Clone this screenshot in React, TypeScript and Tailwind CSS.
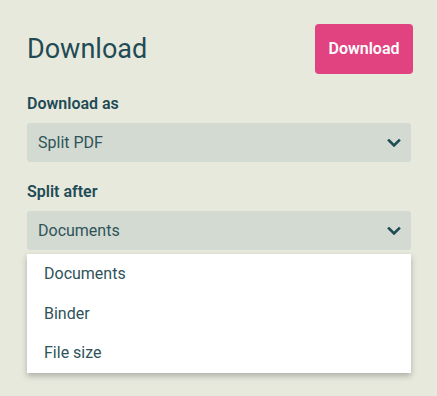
import React from 'react';

function Chevron() {
    return (
        <svg width="14" height="10" viewBox="0 0 14 10" className="text-[#1f4b55]">
            <path d="M2 2.5 L7 7.5 L12 2.5" fill="none" stroke="currentColor" strokeWidth="2.6" strokeLinecap="square" />
        </svg>
    );
}

function Select({ value }: { value: string }) {
    return (
        <div className="h-[39px] w-[384px] rounded-[3px] bg-[#d3dad2] flex items-center justify-between pl-[11px] pr-[10px]">
            <span className="text-base text-[#2e535a]">{value}</span>
            <Chevron />
        </div>
    );
}

export default function App() {
    const options = ['Documents', 'Binder', 'File size'];
    return (
        <div className="w-[437px] h-[396px] bg-[#e8e9dd] pl-[27px] pt-[24px] font-['Roboto',sans-serif]">
            <div className="flex items-center justify-between w-[386px] h-[50px]">
                <h1 className="text-[27px] font-normal text-[#1f4b55] leading-none">Download</h1>
                <button className="h-[50px] w-[98px] rounded-[4px] bg-[#e0437f] text-white text-base font-semibold">
                    Download
                </button>
            </div>
            <div className="mt-[18px] text-base leading-6 font-semibold text-[#1f4b55]">Download as</div>
            <div className="mt-[7px]">
                <Select value="Split PDF" />
            </div>
            <div className="mt-[18px] text-base leading-6 font-semibold text-[#1f4b55]">Split after</div>
            <div className="mt-[7px] relative">
                <Select value="Documents" />
                <ul className="absolute left-0 top-[43px] w-[384px] bg-white shadow-[0_3px_6px_rgba(0,0,0,0.25)] flex flex-col">
                    {options.map((opt) => (
                        <li key={opt} className="h-[39.5px] flex items-center pl-[17px] pt-[1px] text-base text-[#2e535a]">
                            {opt}
                        </li>
                    ))}
                </ul>
            </div>
        </div>
    );
}
